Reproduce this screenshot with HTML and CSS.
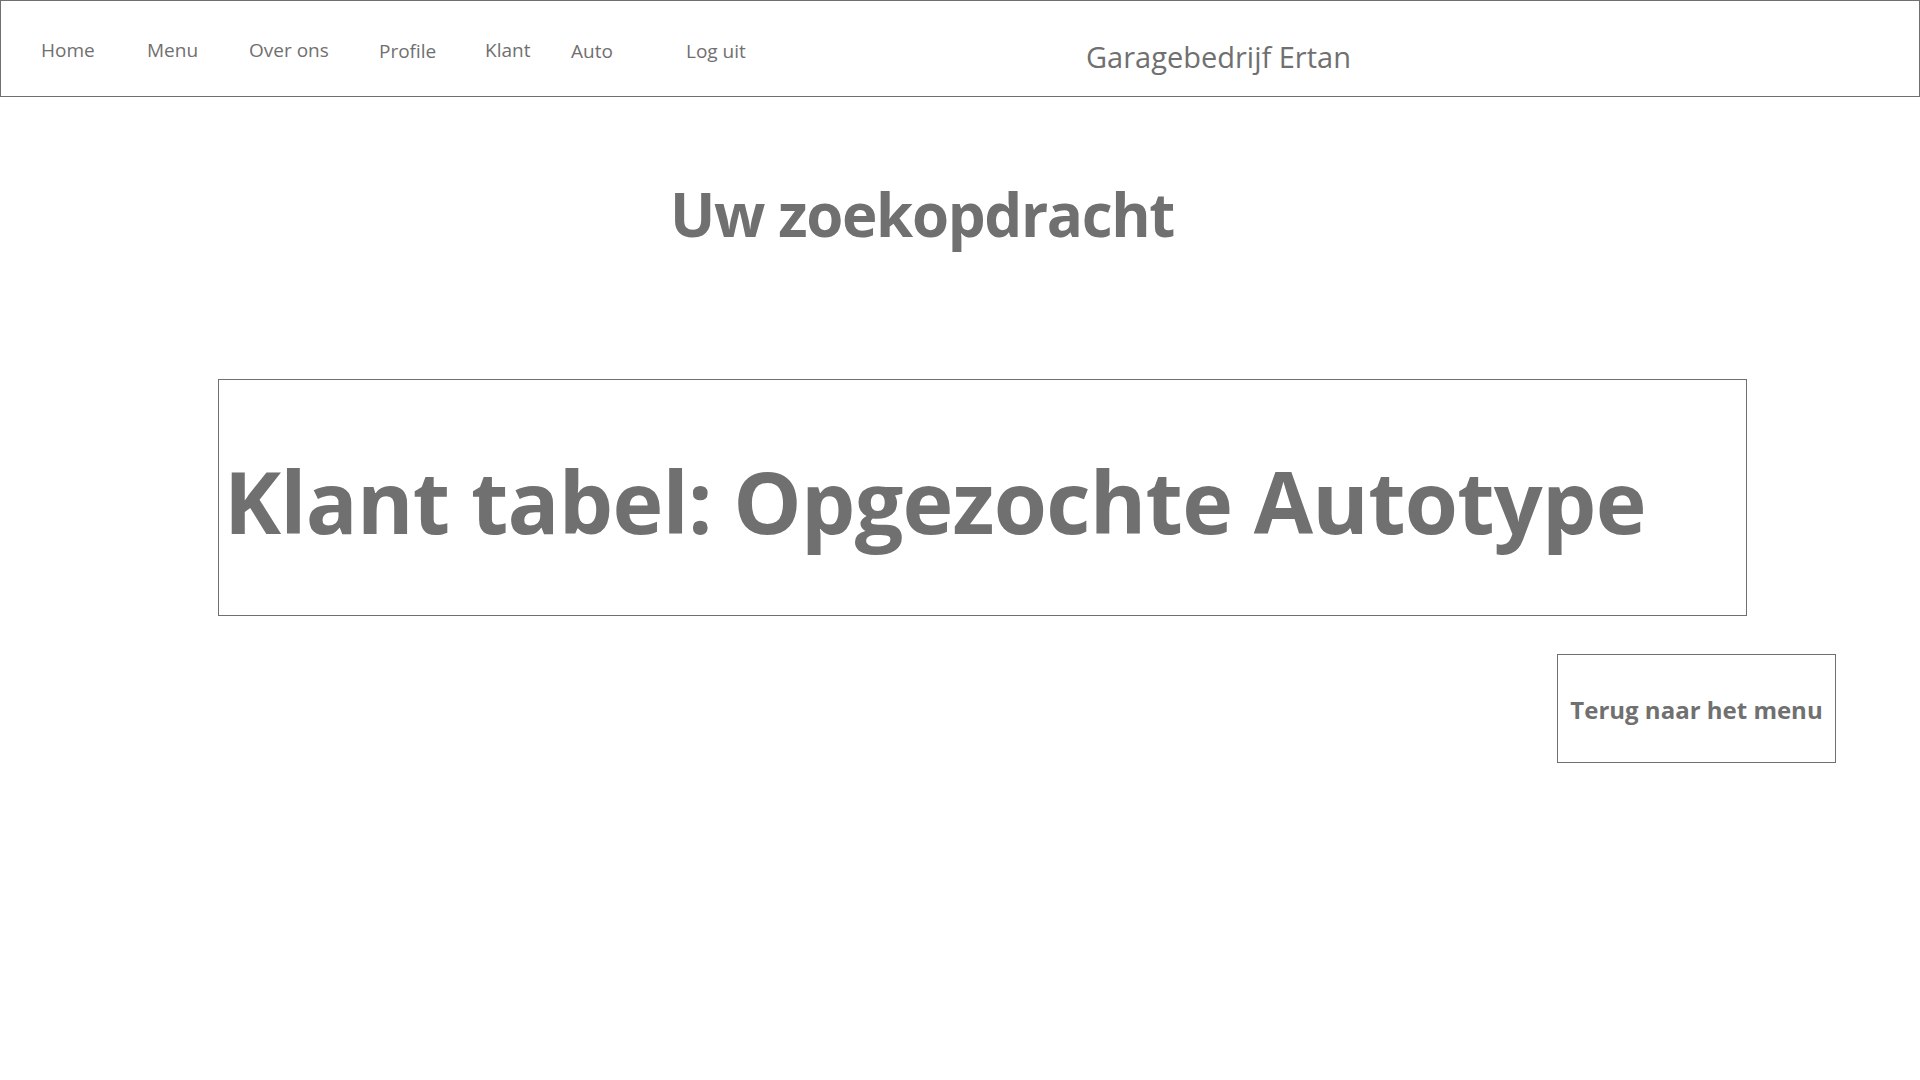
FILE: index.html
```html
<!DOCTYPE html>
<html lang="nl">
<head>
<meta charset="utf-8">
<title>Garagebedrijf Ertan</title>
<link rel="stylesheet" href="styles.css">
</head>
<body>
<header class="site-header">
  <nav class="nav">
    <a class="nav-link" href="#">Home</a>
    <a class="nav-link" href="#">Menu</a>
    <a class="nav-link" href="#">Over ons</a>
    <a class="nav-link nav-link--low" href="#">Profile</a>
    <a class="nav-link" href="#">Klant</a>
    <a class="nav-link nav-link--low" href="#">Auto</a>
    <a class="nav-link nav-link--low" href="#">Log uit</a>
  </nav>
  <div class="brand">Garagebedrijf Ertan</div>
</header>
<main class="content">
  <h2 class="page-title">Uw zoekopdracht</h2>
  <section class="result-box">
    <h1 class="result-title">Klant tabel: Opgezochte Autotype</h1>
  </section>
  <div class="actions">
    <a class="back-button" href="#">Terug naar het menu</a>
  </div>
</main>
</body>
</html>
```
FILE: styles.css
```css
* {
  box-sizing: border-box;
}

html, body {
  margin: 0;
  padding: 0;
  background: #ffffff;
}

body {
  font-family: "Open Sans", "Noto Sans", sans-serif;
  color: #707070;
}

a {
  color: inherit;
  text-decoration: none;
}

.site-header {
  display: grid;
  grid-template-columns: 1085px auto;
  height: 97px;
  border: 1px solid #707070;
}

.nav {
  display: grid;
  grid-template-columns: 106px 102px 130px 106px 86px 115px auto;
  align-items: start;
  padding-left: 40px;
  padding-top: 40px;
}

.nav-link {
  font-size: 19px;
  line-height: 19px;
  white-space: nowrap;
}

.nav-link--low {
  margin-top: 1px;
}

.brand {
  font-size: 29px;
  line-height: 29px;
  padding-top: 41px;
  white-space: nowrap;
}

.content {
  display: flex;
  flex-direction: column;
}

.page-title {
  margin: 87px 0 0 670px;
  font-size: 60px;
  line-height: 60px;
  font-weight: 700;
  letter-spacing: -1.35px;
}

.result-box {
  margin: 135px 0 0 218px;
  width: 1529px;
  height: 237px;
  border: 1px solid #707070;
  padding: 78px 0 0 5px;
}

.result-title {
  margin: 0;
  font-size: 86px;
  line-height: 86px;
  font-weight: 700;
  letter-spacing: -0.75px;
  white-space: nowrap;
}

.actions {
  display: flex;
  justify-content: flex-end;
  padding: 38px 84px 0 0;
}

.back-button {
  display: block;
  width: 279px;
  height: 109px;
  border: 1px solid #707070;
  padding-top: 43px;
  text-align: center;
  font-size: 24px;
  line-height: 24px;
  font-weight: 700;
  white-space: nowrap;
}
```
